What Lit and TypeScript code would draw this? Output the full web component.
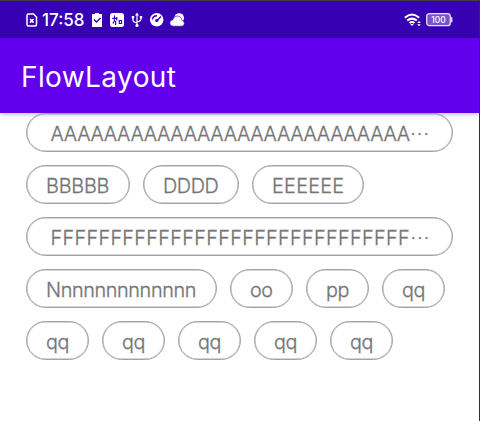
import { LitElement, html, css } from "lit";
import { customElement } from "lit/decorators.js";
import { styleMap } from "lit/directives/style-map.js";

interface Chip { text: string; width: number; spacing?: number; long?: boolean }

const chips: Chip[] = [
  { text: "A".repeat(27), width: 427, long: true, spacing: -0.32 },
  { text: "BBBBB", width: 104, spacing: -0.2 },
  { text: "DDDD", width: 96, spacing: -0.4 },
  { text: "EEEEEE", width: 112, spacing: 0.3 },
  { text: "F".repeat(30), width: 427, long: true, spacing: 0.34 },
  { text: "N" + "n".repeat(12), width: 191, spacing: -0.36 },
  { text: "oo", width: 63, spacing: -0.4 },
  { text: "pp", width: 63, spacing: -0.4 },
  ...Array.from({ length: 6 }, () => ({ text: "qq", width: 63, spacing: -0.4 })),
];

@customElement("app-root")
export class AppRoot extends LitElement {
  static styles = css`
    :host { display: block; height: 421px; box-sizing: border-box; overflow: hidden; background: #fff;
      border-top: 1px solid #3f3f46; border-right: 1px solid #303034;
      font-family: Inter, "Noto Sans CJK SC", sans-serif; }
    .status { height: 37px; background: #3700b3; color: #fff; display: flex; align-items: center;
      padding: 0 26px 0 26px; box-sizing: border-box; }
    .status svg { display: block; flex: none; }
    .time { font-size: 17px; line-height: 20px; font-weight: 500; width: 42px; margin: 0 7px 0 4px; white-space: nowrap; }
    .right { margin-left: auto; display: flex; align-items: center; gap: 4px; }
    .bar { height: 75px; background: #6200ee; color: #fff; display: flex; align-items: center;
      padding: 2px 0 0 21px; box-sizing: border-box; font-size: 28px; letter-spacing: .4px; box-shadow: 0 1px 5px rgba(0,0,0,.3); }
    .flow { display: flex; flex-wrap: wrap; gap: 13px; padding: 0 23px 0 26px; position: relative; }
    .chip { height: 39px; box-sizing: border-box; border: 1px solid #a3a3a3; border-radius: 20px;
      box-shadow: inset 0 0 0 .5px #a9a9a9;
      display: flex; align-items: center; padding: 2px 0 0 19px; color: #757575;
      font-size: 19.8px; line-height: 24px; font-weight: 300; -webkit-text-stroke: .3px #757575; white-space: pre; }
    .long { padding-left: 23.5px; }
    .dots { font-family: "Noto Sans CJK SC", sans-serif; letter-spacing: 0; -webkit-text-stroke: 0; }
  `;

  render() {
    return html`
      <div class="status">
        <svg width="12" height="14" viewBox="0 0 12 14" fill="none" stroke="#fff" stroke-width="1.5">
          <path d="M2.5 1h5L10.5 4v7.5q0 1.5-1.5 1.5h-6.5Q1 13 1 11.5v-9Q1 1 2.5 1zM4 6l3.6 3.6M7.6 6L4 9.6"/>
        </svg>
        <span class="time">17:58</span>
        <svg width="96" height="16" viewBox="91 12 96 16" fill="#fff">
          <path d="M92.5 14H95v-1h4v1h2.5q.5 0 .5.5v12q0 .5-.5.5h-9q-.5 0-.5-.5v-12q0-.5.5-.5z"/>
          <path d="M94 19.5l2.5 2.5 4-4" fill="none" stroke="#3700b3" stroke-width="1.4"/>
          <rect x="110" y="13" width="14" height="14" rx="2.5"/>
          <path d="M112.2 18.3h4.6M114.5 15.5v5l-1.6 3M116.8 17v3.5M115.6 21v4M119.3 20.5h2.2v3h-2.2z" fill="none" stroke="#3700b3" stroke-width="1.2"/>
          <path d="M137 14v11M133 17v3q0 2 4 3M141 17v2q0 2-4 3" fill="none" stroke="#fff" stroke-width="1.2"/>
          <path d="M135 15.5l2-3 2 3z"/><rect x="131.8" y="16" width="2.4" height="2.4"/><rect x="139.8" y="16" width="2.4" height="2.4"/><circle cx="137" cy="25.5" r="1.6"/>
          <circle cx="156.7" cy="19.8" r="6.8"/>
          <path d="M152.3 19.5q.6-3.7 4.7-3.7M157 20.5l4-4" fill="none" stroke="#3700b3" stroke-width="1.4"/>
          <circle cx="156.8" cy="20.5" r="1.6" fill="#3700b3"/>
          <circle cx="179.2" cy="18" r="4.8"/>
          <path d="M173.5 26.2q-3.7 0-3.7-3.2 0-2.7 3-3.2 1-3.8 4.4-3.8 4 0 4.7 4.2 2.4.5 2.4 3 0 3-3 3z" stroke="#3700b3" stroke-width=".6"/>
        </svg>
        <div class="right">
          <svg width="18" height="14" viewBox="0 0 18 14" fill="none" stroke="#fff" stroke-width="2">
            <path d="M.8 4.8Q8 -1.7 15.2 4.8M3.2 7.6Q8 3.6 12.8 7.6M5.5 10Q8 8.2 10.5 10"/>
            <path d="M6.2 11h3.6L8 13z" fill="#fff" stroke="none"/>
            <path d="M13.2 10L15 8l1.8 2zM13.2 11.2h3.6L15 13.2z" fill="#fff" stroke="none"/>
          </svg>
          <svg width="27" height="14" viewBox="0 0 27 14">
            <rect x=".7" y=".7" width="23.6" height="12" rx="2.7" fill="#7854cc" stroke="#e6dff6" stroke-width="1.3"/>
            <path d="M25.7 4.2v5" stroke="#e6dff6" stroke-width="1.4"/>
            <text x="12.5" y="9.9" text-anchor="middle" font-size="8.5" font-weight="500" fill="#fff">100</text>
          </svg>
        </div>
      </div>
      <div class="bar">FlowLayout</div>
      <div class="flow">
        ${chips.map((c) => html`<div class="chip ${c.long ? "long" : ""}"
          style=${styleMap({ width: `${c.width}px`, letterSpacing: `${c.spacing ?? 0}px` })}>${c.text}${c.long ? html`<span class="dots">…</span>` : ""}</div>`)}
      </div>
    `;
  }
}
